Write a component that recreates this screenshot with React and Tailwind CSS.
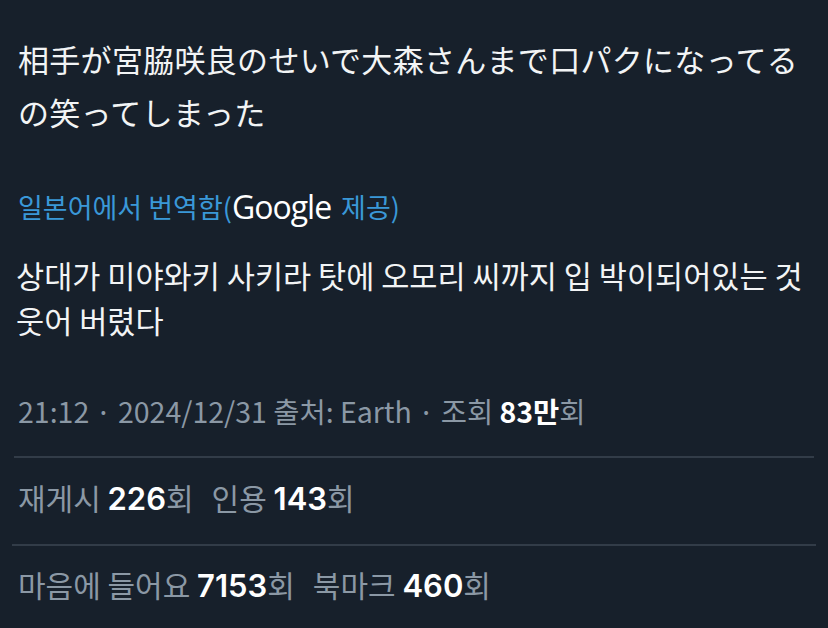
export default function App() {
  const jp = { fontFamily: '"Noto Sans CJK JP", "Noto Sans", sans-serif' };
  const kr = { fontFamily: '"Noto Sans CJK KR", "Noto Sans", sans-serif' };
  const num = { fontFamily: 'Inter, "Noto Sans CJK KR", sans-serif' };
  const N = ({ children }) => (
    <span className="text-white font-semibold text-[31px]" style={num}>{children}</span>
  );
  return (
    <div className="w-[828px] h-[628px] bg-[#17202b] overflow-hidden">
      <div className="px-[18px] pt-[32px]">
        <p className="text-[31px] leading-[53px] text-[#f2f4f5] tracking-[0.3px] whitespace-nowrap" style={jp}>
          相手が宮脇咲良のせいで大森さんまで口パクになってる<br />の笑ってしまった
        </p>
        <div className="mt-[51px] text-[27px] leading-[36px] text-[#3a98d8] flex items-center whitespace-nowrap" style={kr}>
          <span>일본어에서 번역함(</span>
          <span className="text-white font-medium text-[32px] leading-[36px] tracking-[-1px]" style={{ fontFamily: '"Open Sans", sans-serif' }}>Google</span>
          <span className="ml-[10px]">제공)</span>
        </div>
        <p className="mt-[28px] text-[30.6px] leading-[45px] text-[#f2f4f5] -ml-[2px] whitespace-nowrap" style={kr}>
          상대가 미야와키 사키라 탓에 오모리 씨까지 입 박이되어있는 것<br />웃어 버렸다
        </p>
        <div className="mt-[48px] text-[28.5px] leading-[40px] text-[#8b98a5] whitespace-nowrap" style={kr}>
          21:12 · 2024/12/31 출처: Earth · 조회 <span className="text-white font-semibold">83만</span>회
        </div>
      </div>
      <div className="mt-[25px] mx-[14px] h-[2px] bg-[#323c48]" />
      <div className="px-[18px] mt-[19px] text-[30px] leading-[40px] text-[#8b98a5] whitespace-nowrap" style={kr}>
        재게시 <N>226</N>회<span className="ml-[18px]">인용</span> <N>143</N>회
      </div>
      <div className="mt-[25px] mx-[12px] h-[2px] bg-[#323c48]" />
      <div className="px-[18px] mt-[18px] text-[30px] leading-[40px] text-[#8b98a5] whitespace-nowrap" style={kr}>
        마음에 들어요 <N>7153</N>회<span className="ml-[18px]">북마크</span> <N>460</N>회
      </div>
    </div>
  );
}
